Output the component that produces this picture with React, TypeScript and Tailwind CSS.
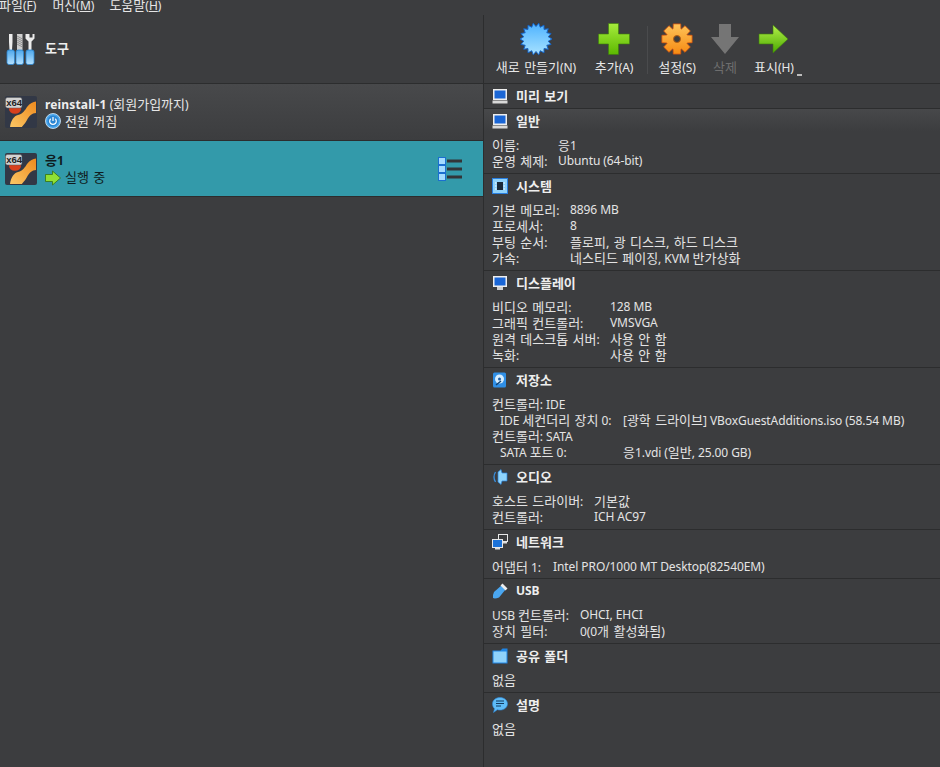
import React from "react";

const FONT = "[font-family:'Noto_Sans','Noto_Sans_CJK_KR',sans-serif]";

function K({ t }: { t: string }) {
  const parts = t.split(/([가-힣]+(?:,? [가-힣]+)*)/);
  return (
    <>
      {parts.map((p, i) =>
        i % 2 ? (
          <span key={i} className="text-[13px] [word-spacing:1px]">
            {p}
          </span>
        ) : (
          <span key={i} className="tracking-[-0.08px]">
            {p}
          </span>
        )
      )}
    </>
  );
}

function Vm({ id }: { id: string }) {
  return (
    <svg width="32" height="32" viewBox="0 0 32 32" className="shrink-0">
      <defs>
        <linearGradient id={id} x1="0" y1="1" x2="1" y2="0">
          <stop offset="0" stopColor="#fbc765" />
          <stop offset="1" stopColor="#ee8a1e" />
        </linearGradient>
      </defs>
      <rect x="0" y="0" width="32" height="32" rx="2" fill="#323846" />
      <path d="M5 31 C6 24 9 20 13 19 C18 18 20 14 22 11 C25 7 28 6 31 5.500 L31 17 C27 17 24 20 22 24 C20 28 18 29 17 31 Z" fill={`url(#${id})`} />
      <ellipse cx="10" cy="13" rx="6" ry="4.800" fill="#d8401c" />
      <rect x="0.500" y="1.500" width="16.500" height="10.500" rx="2" fill="#d2d2d2" stroke="#5a5a5a" strokeWidth="0.500" />
      <text x="1.300" y="10.200" fontSize="9.500" fontWeight="700" fontFamily="Liberation Sans" fill="#222">x64</text>
    </svg>
  );
}

function Tools() {
  return (
    <svg width="30" height="32" viewBox="0 0 30 32">
      <defs>
        <linearGradient id="hd" x1="0" y1="0" x2="0" y2="1">
          <stop offset="0" stopColor="#4ea8ec" />
          <stop offset="1" stopColor="#b6e2ff" />
        </linearGradient>
      </defs>
      <path d="M3 1h3.500v8L6 17H3.500L3 9z" fill="#ececec" />
      <rect x="11" y="1" width="5.500" height="16" fill="#cfcfcf" />
      <path d="M11 3l5.500 3M11 7l5.500 3M11 11l5.500 3M11 5l5.500 3M11 9l5.500 3" stroke="#777" strokeWidth="0.700" />
      <path d="M19.500 1v4.500l3 3V17h3V8.500l3-3V1L26.500 1v3.500h-3V1z" fill="#ececec" />
      {[1, 10, 20].map((x) => (
        <rect key={x} x={x} y="17" width={x === 20 ? 8 : 7.500} height="14.500" rx="2" fill="url(#hd)" stroke="#2b86d0" strokeWidth="0.800" />
      ))}
    </svg>
  );
}

function Monitor({ stand = true }: { stand?: boolean }) {
  return (
    <svg width="16" height="16" viewBox="0 0 16 16" className="shrink-0">
      <rect x="1" y="1" width="14" height="11" fill="#eeeeee" />
      <rect x="2.500" y="2.500" width="11" height="8" fill="#1a66d6" />
      {stand ? <rect x="0.500" y="12.500" width="15" height="3" fill="#d8d8d8" /> : <rect x="5" y="12" width="6" height="3" fill="#cfcfcf" />}
    </svg>
  );
}

function Chip() {
  return (
    <svg width="16" height="16" viewBox="0 0 16 16" className="shrink-0">
      <rect x="0.500" y="0.500" width="15" height="15" fill="#8fd2fb" stroke="#2a7fe0" />
      <rect x="5" y="4" width="6" height="8" fill="#1c2a3a" />
      <path d="M3 5h1.500M3 8h1.500M3 11h1.500M11.500 5h1.500M11.500 8h1.500M11.500 11h1.500" stroke="#fff" />
    </svg>
  );
}

function Disk() {
  return (
    <svg width="16" height="16" viewBox="0 0 16 16" className="shrink-0">
      <rect x="1" y="0.500" width="13" height="15" rx="1.500" fill="#2f8fe6" />
      <circle cx="7.500" cy="7" r="4.500" fill="#d6eeff" />
      <circle cx="7.500" cy="7" r="1.500" fill="#1e5fa8" />
      <path d="M4 13l5-4" stroke="#12406f" strokeWidth="1.500" />
    </svg>
  );
}

function Audio() {
  return (
    <svg width="16" height="16" viewBox="0 0 16 16" className="shrink-0">
      <path d="M6 3L9 .5 10 4h5v8h-5l-1 3.500L6 13z" fill="#8fd4fc" stroke="#2a84dc" strokeWidth="0.700" />
      <path d="M3.500 3Q.5 8 3.500 13" stroke="#3a90e0" fill="none" strokeWidth="1.300" />
    </svg>
  );
}

function Net() {
  return (
    <svg width="16" height="16" viewBox="0 0 16 16" className="shrink-0">
      <rect x="6.500" y="0.500" width="9" height="7" fill="#3c3d3f" stroke="#e8e8e8" />
      <rect x="0.500" y="5.500" width="10" height="8" fill="#1c72d8" stroke="#e8e8e8" />
      <rect x="3" y="14" width="5" height="1.500" fill="#ddd" />
      <rect x="11" y="8" width="4" height="1.500" fill="#ddd" />
    </svg>
  );
}

function Usb() {
  return (
    <svg width="16" height="16" viewBox="0 0 16 16" className="shrink-0">
      <path d="M10 2L14 6 7 14.500Q3 16 1 15 .5 12 2 9z" fill="#4aa6f0" />
      <path d="M10.500 .5l-2 2 5 5 2-2z" fill="#ececec" />
    </svg>
  );
}

function Folder() {
  return (
    <svg width="16" height="16" viewBox="0 0 16 16" className="shrink-0">
      <path d="M.5 2.500h8l2-2h5v15H.5z" fill="#1f86e6" />
      <rect x="1.500" y="3.500" width="13" height="11" fill="#8fd2fb" />
    </svg>
  );
}

function Chat() {
  return (
    <svg width="16" height="16" viewBox="0 0 16 16" className="shrink-0">
      <path d="M8 .5c4.200 0 7.500 2.700 7.500 6.300s-3.300 6.300-7.500 6.300c-1 0-1.800-.1-2.700-.4L1.500 15.500l1-3.800C1.200 10.500.5 8.800.5 6.800.5 3.200 3.800.5 8 .5z" fill="#5fbcf7" stroke="#2b86d8" strokeWidth="0.600" />
      <path d="M4 4h8M4 6.500h8M4 9h5" stroke="#123a60" strokeWidth="1.100" />
    </svg>
  );
}

function Power() {
  return (
    <svg width="16" height="16" viewBox="0 0 16 16" className="shrink-0">
      <circle cx="8" cy="8" r="7.500" fill="#4aa6ec" stroke="#d8eeff" strokeWidth="0.800" />
      <circle cx="8" cy="8" r="5.500" fill="#2a86d4" />
      <path d="M5.700 5.800a3.300 3.300 0 1 0 4.600 0" fill="none" stroke="#fff" strokeWidth="1.200" />
      <path d="M8 4v4" stroke="#fff" strokeWidth="1.200" />
    </svg>
  );
}

function SmallArrow() {
  return (
    <svg width="16" height="16" viewBox="0 0 16 16" className="shrink-0">
      <path d="M.5 4.500h7V1l8 7-8 7v-3.500h-7z" fill="#90e034" stroke="#35700f" strokeWidth="0.800" />
    </svg>
  );
}

function ListIcon() {
  return (
    <svg width="24" height="24" viewBox="0 0 24 24">
      {[0, 8, 16].map((y) => (
        <g key={y}>
          <rect x="0.500" y={y + 0.5} width="7" height="7" fill="#a5dcff" stroke="#1b6fd0" />
          <rect x="9" y={y + 2.5} width="15" height="3" fill="#333538" />
        </g>
      ))}
    </svg>
  );
}

function Star() {
  const pts: string[] = [];
  for (let i = 0; i < 36; i++) {
    const r = i % 2 ? 12.500 : 16;
    const a = (i * Math.PI) / 18;
    pts.push(`${16 + r * Math.cos(a)},${16 + r * Math.sin(a)}`);
  }
  return (
    <svg width="32" height="32" viewBox="0 0 32 32">
      <defs>
        <linearGradient id="star" x1="0" y1="0" x2="0" y2="1">
          <stop offset="0" stopColor="#4db2ff" />
          <stop offset="1" stopColor="#a8e2ff" />
        </linearGradient>
      </defs>
      <polygon points={pts.join(" ")} fill="url(#star)" stroke="#1464c8" strokeWidth="1" />
    </svg>
  );
}

function Plus() {
  return (
    <svg width="32" height="32" viewBox="0 0 32 32">
      <defs>
        <linearGradient id="gr" x1="0" y1="0" x2="0" y2="1">
          <stop offset="0" stopColor="#a6ec3c" />
          <stop offset="1" stopColor="#5cb800" />
        </linearGradient>
      </defs>
      <path d="M10.500 .5h10v10.500H31.500v10H20.500v10.500h-10V21H.5V11h10z" fill="url(#gr)" stroke="#3d7d0c" strokeWidth="0.600" />
    </svg>
  );
}

function Gear() {
  const n = 8;
  let d = "";
  for (let i = 0; i < n; i++) {
    const a = (i * 2 * Math.PI) / n;
    const w = 0.24;
    const p = (r: number, t: number) => `${(16 + r * Math.cos(t)).toFixed(1)} ${(16 + r * Math.sin(t)).toFixed(1)}`;
    d += `${i === 0 ? "M" : "L"}${p(11, a - w * 1.5)} L${p(15.500, a - w)} L${p(15.500, a + w)} L${p(11, a + w * 1.5)} `;
  }
  d += "Z";
  return (
    <svg width="32" height="32" viewBox="0 0 32 32">
      <defs>
        <linearGradient id="go" x1="0" y1="0" x2="0" y2="1">
          <stop offset="0" stopColor="#ffc45a" />
          <stop offset="1" stopColor="#f58a12" />
        </linearGradient>
      </defs>
      <path d={d} fill="url(#go)" stroke="#d8560e" strokeWidth="0.800" />
      <circle cx="16" cy="16" r="3.500" fill="#3c3d3f" stroke="#b8600e" />
    </svg>
  );
}

function Down() {
  return (
    <svg width="30" height="32" viewBox="0 0 30 32">
      <path d="M9 1h12v13h8L15 31 1 14h8z" fill="#757575" />
    </svg>
  );
}

function RightArrow() {
  return (
    <svg width="32" height="30" viewBox="0 0 32 30">
      <defs>
        <linearGradient id="ga" x1="0" y1="0" x2="0" y2="1">
          <stop offset="0" stopColor="#b4f04a" />
          <stop offset="1" stopColor="#4aa800" />
        </linearGradient>
      </defs>
      <path d="M1 10h14V1l15 14-15 14v-9H1z" fill="url(#ga)" stroke="#3d7d0c" strokeWidth="0.600" />
    </svg>
  );
}

function Tool({ icon, label, disabled, w, caret }: { icon: React.ReactNode; label: string; disabled?: boolean; w: string; caret?: boolean }) {
  return (
    <div className={`relative flex flex-col items-center ${w}`}>
      <div className="h-8 flex items-center justify-center">{icon}</div>
      <div className={`mt-[4px] h-4 leading-4 text-xs whitespace-nowrap ${disabled ? "text-[#6e6e6e]" : "text-[#e8e8e8]"}`}>
        <K t={label} />
      </div>
      {caret && <span className="absolute left-[42px] top-[51px] w-[5px] h-[2px] bg-[#bdbdbd]" />}
    </div>
  );
}

type Sec = { title: string; icon: React.ReactNode; cls: string; col: string; rows: [string, string][]; plain?: boolean; single?: string; pt?: string };

const SECTIONS: Sec[] = [
  { title: "일반", icon: <Monitor />, cls: "h-[65px] bg-gradient-to-b from-[#47484a] to-[#3c3d3f] to-[22px]", col: "grid-cols-[66px_1fr]", rows: [["이름:", "응1"], ["운영 체제:", "Ubuntu (64-bit)"]] },
  { title: "시스템", icon: <Chip />, cls: "h-[97px]", col: "grid-cols-[78px_1fr]", rows: [["기본 메모리:", "8896 MB"], ["프로세서:", "8"], ["부팅 순서:", "플로피, 광 디스크, 하드 디스크"], ["가속:", "네스티드 페이징, KVM 반가상화"]] },
  { title: "디스플레이", icon: <Monitor stand={false} />, cls: "h-[97px]", col: "grid-cols-[118px_1fr]", rows: [["비디오 메모리:", "128 MB"], ["그래픽 컨트롤러:", "VMSVGA"], ["원격 데스크톱 서버:", "사용 안 함"], ["녹화:", "사용 안 함"]] },
  { title: "저장소", icon: <Disk />, cls: "h-[97px]", col: "", rows: [], plain: true },
  { title: "오디오", icon: <Audio />, cls: "h-[65px]", col: "grid-cols-[102px_1fr]", rows: [["호스트 드라이버:", "기본값"], ["컨트롤러:", "ICH AC97"]] },
  { title: "네트워크", icon: <Net />, cls: "h-[49px]", col: "grid-cols-[61px_1fr]", rows: [["어댑터 1:", "Intel PRO/1000 MT Desktop(82540EM)"]], pt: "pt-[5px]" },
  { title: "USB", icon: <Usb />, cls: "h-[65px]", col: "grid-cols-[88px_1fr]", rows: [["USB 컨트롤러:", "OHCI, EHCI"], ["장치 필터:", "0(0개 활성화됨)"]] },
  { title: "공유 폴더", icon: <Folder />, cls: "h-[49px]", col: "", rows: [], single: "없음" },
  { title: "설명", icon: <Chat />, cls: "h-[49px]", col: "", rows: [], single: "없음" },
];

function Header({ icon, title }: { icon: React.ReactNode; title: string }) {
  return (
    <div className="h-6 flex items-center pl-2 gap-2">
      {icon}
      <span className="font-bold text-xs leading-4 text-[#eeeeee]">
        <K t={title} />
      </span>
    </div>
  );
}

function Storage() {
  return (
    <div className="pl-2 leading-4 text-xs text-[#e4e4e4] whitespace-pre">
      <div className="h-4"><K t="컨트롤러: IDE" /></div>
      <div className="h-4 grid grid-cols-[123px_1fr] pl-2">
        <span><K t="IDE 세컨더리 장치 0:" /></span>
        <span><K t="[광학 드라이브] VBoxGuestAdditions.iso (58.54 MB)" /></span>
      </div>
      <div className="h-4"><K t="컨트롤러: SATA" /></div>
      <div className="h-4 grid grid-cols-[123px_1fr] pl-2">
        <span><K t="SATA 포트 0:" /></span>
        <span><K t="응1.vdi (일반, 25.00 GB)" /></span>
      </div>
    </div>
  );
}

export default function App() {
  return (
    <div className={`w-[940px] h-[767px] overflow-hidden bg-[#3c3d3f] text-[#e6e6e6] text-xs flex flex-col ${FONT}`}>
      <div className="h-[15px] shrink-0 flex gap-[14px] -ml-[1px] text-xs leading-[11px] text-[#e6e6e6] overflow-hidden">
        <span><K t="파일" />(<u>F</u>)</span>
        <span className="ml-[2px]"><K t="머신" />(<u>M</u>)</span>
        <span className="ml-[1px]"><K t="도움말" />(<u>H</u>)</span>
      </div>
      <div className="flex-1 flex min-h-0">
        <div className="w-[483px] shrink-0 flex flex-col">
          <div className="h-[69px] flex items-center pl-[6px] gap-[9px] border-b border-[#2c2d2e]">
            <Tools />
            <span className="font-bold text-xs text-[#eeeeee]"><K t="도구" /></span>
          </div>
          <div className="h-[57px] flex items-center pl-[5px] gap-2 bg-gradient-to-b from-[#48494b] to-[#3c3d3f] border-b border-[#2c2d2e]">
            <Vm id="vm1" />
            <div className="flex flex-col">
              <div className="h-[18px] leading-[18px]"><span className="font-bold text-[#eeeeee] tracking-[0.15px]">reinstall-1</span> <K t="(회원가입까지)" /></div>
              <div className="flex items-center gap-[4px] h-[17px] leading-[17px]"><Power /><span><K t="전원 꺼짐" /></span></div>
            </div>
          </div>
          <div className="h-[56px] flex items-center pl-[5px] gap-2 bg-[#339aaa] border-b border-[#2c2d2e] text-[#0f1c20] pr-[21px]">
            <Vm id="vm2" />
            <div className="flex flex-col flex-1">
              <div className="h-[18px] leading-[18px] font-bold"><K t="응1" /></div>
              <div className="flex items-center gap-[4px] h-[18px] leading-[18px]"><SmallArrow /><span><K t="실행 중" /></span></div>
            </div>
            <ListIcon />
          </div>
        </div>
        <div className="w-[1px] bg-[#2c2d2e] shrink-0" />
        <div className="flex-1 flex flex-col min-w-0">
          <div className="h-[69px] shrink-0 flex pt-[8px] pl-[12px] border-b border-[#2c2d2e]">
            <Tool icon={<Star />} label="새로 만들기(N)" w="w-[80px]" />
            <Tool icon={<Plus />} label="추가(A)" w="w-[40px] ml-[18px]" />
            <div className="w-px h-[48px] bg-[#4a4b4d] ml-[13px] mt-[3px]" />
            <Tool icon={<Gear />} label="설정(S)" w="w-[38px] ml-[10px]" />
            <Tool icon={<Down />} label="삭제" disabled w="w-[24px] ml-[17px]" />
            <Tool icon={<RightArrow />} label="표시(H)" caret w="w-[38px] ml-[18px]" />
          </div>
          <div className="h-[25px] shrink-0 border-b border-[#2c2d2e]">
            <Header icon={<Monitor />} title="미리 보기" />
          </div>
          {SECTIONS.map((s) => (
            <div key={s.title} className={`${s.cls} shrink-0 border-b border-[#2c2d2e] last:border-b-0`}>
              <Header icon={s.icon} title={s.title} />
              <div className={s.pt ?? "pt-[4px]"}>
                {s.plain && <Storage />}
                {s.single && <div className="h-4 pl-2 leading-4 text-[#e4e4e4]"><K t={s.single} /></div>}
                {s.rows.map(([a, b]) => (
                  <div key={a} className={`h-4 grid ${s.col} pl-2 leading-4 text-xs text-[#e4e4e4] whitespace-nowrap`}>
                    <span><K t={a} /></span>
                    <span><K t={b} /></span>
                  </div>
                ))}
              </div>
            </div>
          ))}
        </div>
      </div>
    </div>
  );
}
